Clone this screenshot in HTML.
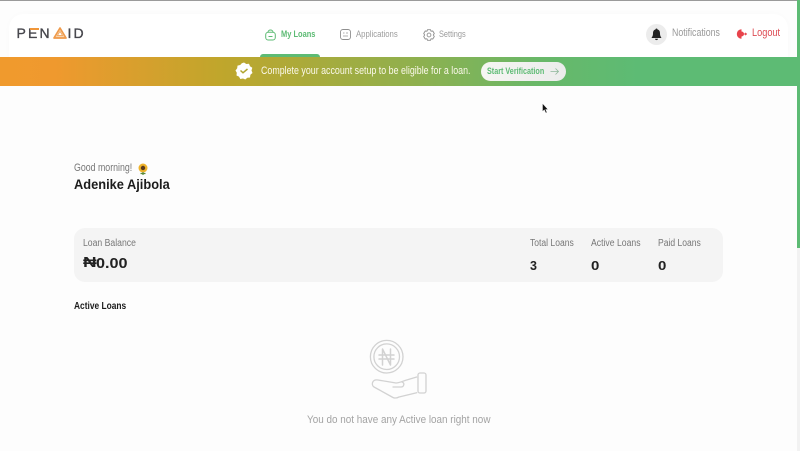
<!DOCTYPE html>
<html><head><meta charset="utf-8">
<style>
html,body{margin:0;padding:0;width:800px;height:451px;overflow:hidden;background:#fdfdfd;font-family:"Liberation Sans","DejaVu Sans",sans-serif}
.a{position:absolute;white-space:nowrap;line-height:1;transform-origin:0 50%}
svg{position:absolute;overflow:visible}
.l{-webkit-text-stroke:.35px #46464c;font-size:14px;color:#46464c;top:26.4px}
</style></head><body>
<div class="a" style="left:0;top:0;width:800px;height:1px;background:#9a9a9a"></div>
<div class="a" style="left:9px;top:14px;width:779px;height:43px;background:#fff;border-radius:14px 14px 0 0;box-shadow:0 0 6px rgba(0,0,0,.02)"></div>

<!-- logo -->
<div class="a l" style="left:16.500px">P</div>
<div class="a l" style="left:28px">E</div>
<div class="a" style="left:29.500px;top:28px;width:9px;height:1.600px;background:#f0963a"></div>
<div class="a l" style="left:39.500px">N</div>
<svg style="left:52.500px;top:27px" width="15" height="12" viewBox="0 0 15 12"><path d="M7 1L13 11H1Z" fill="#f7d3ae" stroke="#ef9a4a" stroke-width="1.700" stroke-linejoin="round"/><path d="M7 4.500L9.500 8.500H4.500Z" fill="#fff" stroke="#ef9a4a" stroke-width=".7"/></svg>
<div class="a l" style="left:67.500px">I</div>
<div class="a l" style="left:73.500px">D</div>

<!-- nav -->
<svg style="left:265px;top:29px" width="11" height="12" viewBox="0 0 11 12" fill="none" stroke="#5dbb74" stroke-width="1"><rect x=".7" y="3.300" width="9.600" height="7.700" rx="2.500"/><path d="M3 3.300C3 .3 8 .3 8 3.300M3.500 7.500h4"/></svg>
<div class="a" style="left:281px;top:29.700px;font-size:9px;font-weight:bold;color:#5dbb74;transform:scaleX(.83)">My Loans</div>
<div class="a" style="left:260px;top:54px;width:60px;height:3px;background:#5dbb74;border-radius:3px 3px 0 0"></div>
<svg style="left:340px;top:29px" width="11" height="11" viewBox="0 0 11 11" fill="none" stroke="#8f8f8f" stroke-width=".9"><rect x=".5" y=".5" width="10" height="10" rx="2.500"/><path d="M3 4h1.500M6 4h2M3 7h5" stroke="#b0b0b0"/></svg>
<div class="a" style="left:356px;top:29.700px;font-size:9px;color:#9c9c9c;transform:scaleX(.86)">Applications</div>
<svg style="left:422.500px;top:28.500px" width="12" height="12" viewBox="0 0 12 12" fill="none" stroke="#8f8f8f" stroke-width=".9"><path d="M4.500 .7h3L8 2.200 9.800 2 11.300 4.500 10.300 6 11.300 7.500 9.800 10 8 9.800 7.500 11.300h-3L4 9.800 2.200 10 .7 7.500 1.700 6 .7 4.500 2.200 2 4 2.200Z" stroke-linejoin="round"/><circle cx="6" cy="6" r="1.900"/></svg>
<div class="a" style="left:439px;top:29.700px;font-size:9px;color:#9c9c9c;transform:scaleX(.82)">Settings</div>

<div class="a" style="left:646px;top:24px;width:21px;height:21px;border-radius:50%;background:#ececec"></div>
<svg style="left:651px;top:28px" width="11" height="13" viewBox="0 0 11 13"><path d="M5.500 .5C6.300 .5 6.500 1 6.500 1.500 8.500 2 9 3.500 9 5.500 9 8 10 9 10.500 10H.5C1 9 2 8 2 5.500 2 3.500 2.500 2 4.500 1.500 4.500 1 4.700 .5 5.500 .5ZM4 10.800h3C7 12.600 4 12.600 4 10.800Z" fill="#222"/></svg>
<div class="a" style="left:672px;top:28px;font-size:11px;color:#999;transform:scaleX(.8)">Notifications</div>
<svg style="left:737px;top:29px" width="10" height="10" viewBox="0 0 10 10"><path d="M4.500 .3A4.500 4.500 0 1 0 4.500 9.700Z" fill="#e8434b"/><path d="M4.500 2.500A2.500 2.500 0 0 1 7 5 2.500 2.500 0 0 1 4.500 7.500Z" fill="#e8434b"/><path d="M6 5h3.500M8.200 3.800L9.500 5 8.200 6.200" stroke="#e8434b" stroke-width=".9" fill="none"/></svg>
<div class="a" style="left:752px;top:28px;font-size:11px;color:#dd4a52;transform:scaleX(.835)">Logout</div>

<!-- banner -->
<div class="a" style="left:0;top:57px;width:797px;height:29px;background:linear-gradient(90deg,#f09a2d 0%,#ef992e 7%,#bfa62c 28%,#8fb04e 52%,#68b869 68%,#5dbb74 80%,#5dbb74 100%)"></div>
<svg style="left:235px;top:62px" width="18" height="18" viewBox="0 0 18 18"><path d="M9 .5L11.300 2 14 1.800 15 4.300 17.300 5.800 16.500 8.500 17.500 11 15.400 12.800 15 15.500 12.300 15.800 10.300 17.500 8 16.500 5.300 17 4 14.600 1.500 13.500 1.800 10.800 .5 8.500 2.200 6.300 2.500 3.600 5.200 3 6.800 1.200Z" fill="#fff"/><path d="M5.500 8.500L8 10.800 12.500 7" fill="none" stroke="#b0a42e" stroke-width="1.500"/></svg>
<div class="a" style="left:261px;top:66.200px;font-size:10.600px;color:#fbf8ea;transform:scaleX(.837)">Complete your account setup to be eligible for a loan.</div>
<div class="a" style="left:481px;top:62px;width:85px;height:19px;border-radius:10px;background:linear-gradient(90deg,#f6f6f3,#ececec)"></div>
<div class="a" style="left:487px;top:66.700px;font-size:9px;font-weight:bold;color:#5dbb74;transform:scaleX(.8)">Start Verification</div>
<svg style="left:550px;top:67px" width="9" height="9" viewBox="0 0 9 9" fill="none" stroke="#8fb79a" stroke-width=".8"><path d="M.5 4.500h8M5.500 1.500l3 3-3 3"/></svg>

<!-- scrollbar -->
<div class="a" style="left:797px;top:0;width:3px;height:248px;background:#5dbb74"></div>
<div class="a" style="left:797px;top:248px;width:3px;height:203px;background:#f2f2f2"></div>

<!-- cursor -->
<svg style="left:542px;top:103px" width="7" height="11" viewBox="0 0 7 11"><path d="M.5 .5V8.500L2.300 6.800 3.800 10 5 9.400 3.600 6.500H6Z" fill="#111" stroke="#fff" stroke-width=".4"/></svg>

<!-- greeting -->
<div class="a" style="left:74px;top:163.200px;font-size:11px;color:#777;transform:scaleX(.8)">Good morning!</div>
<svg style="left:136.500px;top:163px" width="12" height="12" viewBox="0 0 12 12"><circle cx="6" cy="5" r="4.500" fill="#eeb32b"/><circle cx="6" cy="5" r="2.200" fill="#5a3a1c"/><path d="M6 9v3M3.500 10.500h5" stroke="#5b8a3a" stroke-width="1.200"/></svg>
<div class="a" style="left:74px;top:178px;font-size:13.500px;font-weight:bold;color:#1c1c1c;transform:scaleX(.95)">Adenike Ajibola</div>

<!-- card -->
<div class="a" style="left:74px;top:228px;width:649px;height:54px;background:#f4f4f4;border-radius:11px"></div>
<div class="a" style="left:83px;top:238.700px;font-size:10px;color:#777;transform:scaleX(.865)">Loan Balance</div>
<div class="a" style="left:83px;top:255.500px;font-size:14.500px;font-weight:bold;color:#222;transform:scaleX(1.3)">₦</div>
<div class="a" style="left:95.500px;top:255.500px;font-size:15px;font-weight:bold;color:#222;transform:scaleX(1.08)">0.00</div>
<div class="a" style="left:530px;top:238.700px;font-size:10px;color:#777;transform:scaleX(.855)">Total Loans</div>
<div class="a" style="left:591px;top:238.700px;font-size:10px;color:#777;transform:scaleX(.865)">Active Loans</div>
<div class="a" style="left:658px;top:238.700px;font-size:10px;color:#777;transform:scaleX(.855)">Paid Loans</div>
<div class="a" style="left:530px;top:260px;font-size:12.500px;font-weight:bold;color:#222">3</div>
<div class="a" style="left:591px;top:260px;font-size:12.500px;font-weight:bold;color:#222;transform:scaleX(1.2)">0</div>
<div class="a" style="left:658px;top:260px;font-size:12.500px;font-weight:bold;color:#222;transform:scaleX(1.2)">0</div>

<div class="a" style="left:74px;top:301.700px;font-size:9.800px;font-weight:bold;color:#1c1c1c;transform:scaleX(.855)">Active Loans</div>

<!-- empty state -->
<svg style="left:369px;top:342px" width="58" height="58" viewBox="0 0 58 58" fill="none" stroke="#d2d2d2" stroke-width="1.300" stroke-linejoin="round" stroke-linecap="round">
<circle cx="17.700" cy="14.700" r="16.300"/><circle cx="17.700" cy="14.700" r="12.800"/>
<path d="M13.500 23V7L21.500 23V7M10 13h15M10 17h15" stroke-width="1.500"/>
<path d="M47.700 35L36 38.500C33 39.500 30 41 27 41L9 38C3 37 2 43 5 45L24 55.500C26 56.500 28 56 30 55L47.700 50.700"/>
<path d="M24 45L32 45C35 45 36 41 33 40"/>
<rect x="49" y="31" width="8" height="20" rx="2"/>
</svg>
<div class="a" style="left:307px;top:414.500px;font-size:11px;color:#a3a3a3;transform:scaleX(.9)">You do not have any Active loan right now</div>
</body></html>
